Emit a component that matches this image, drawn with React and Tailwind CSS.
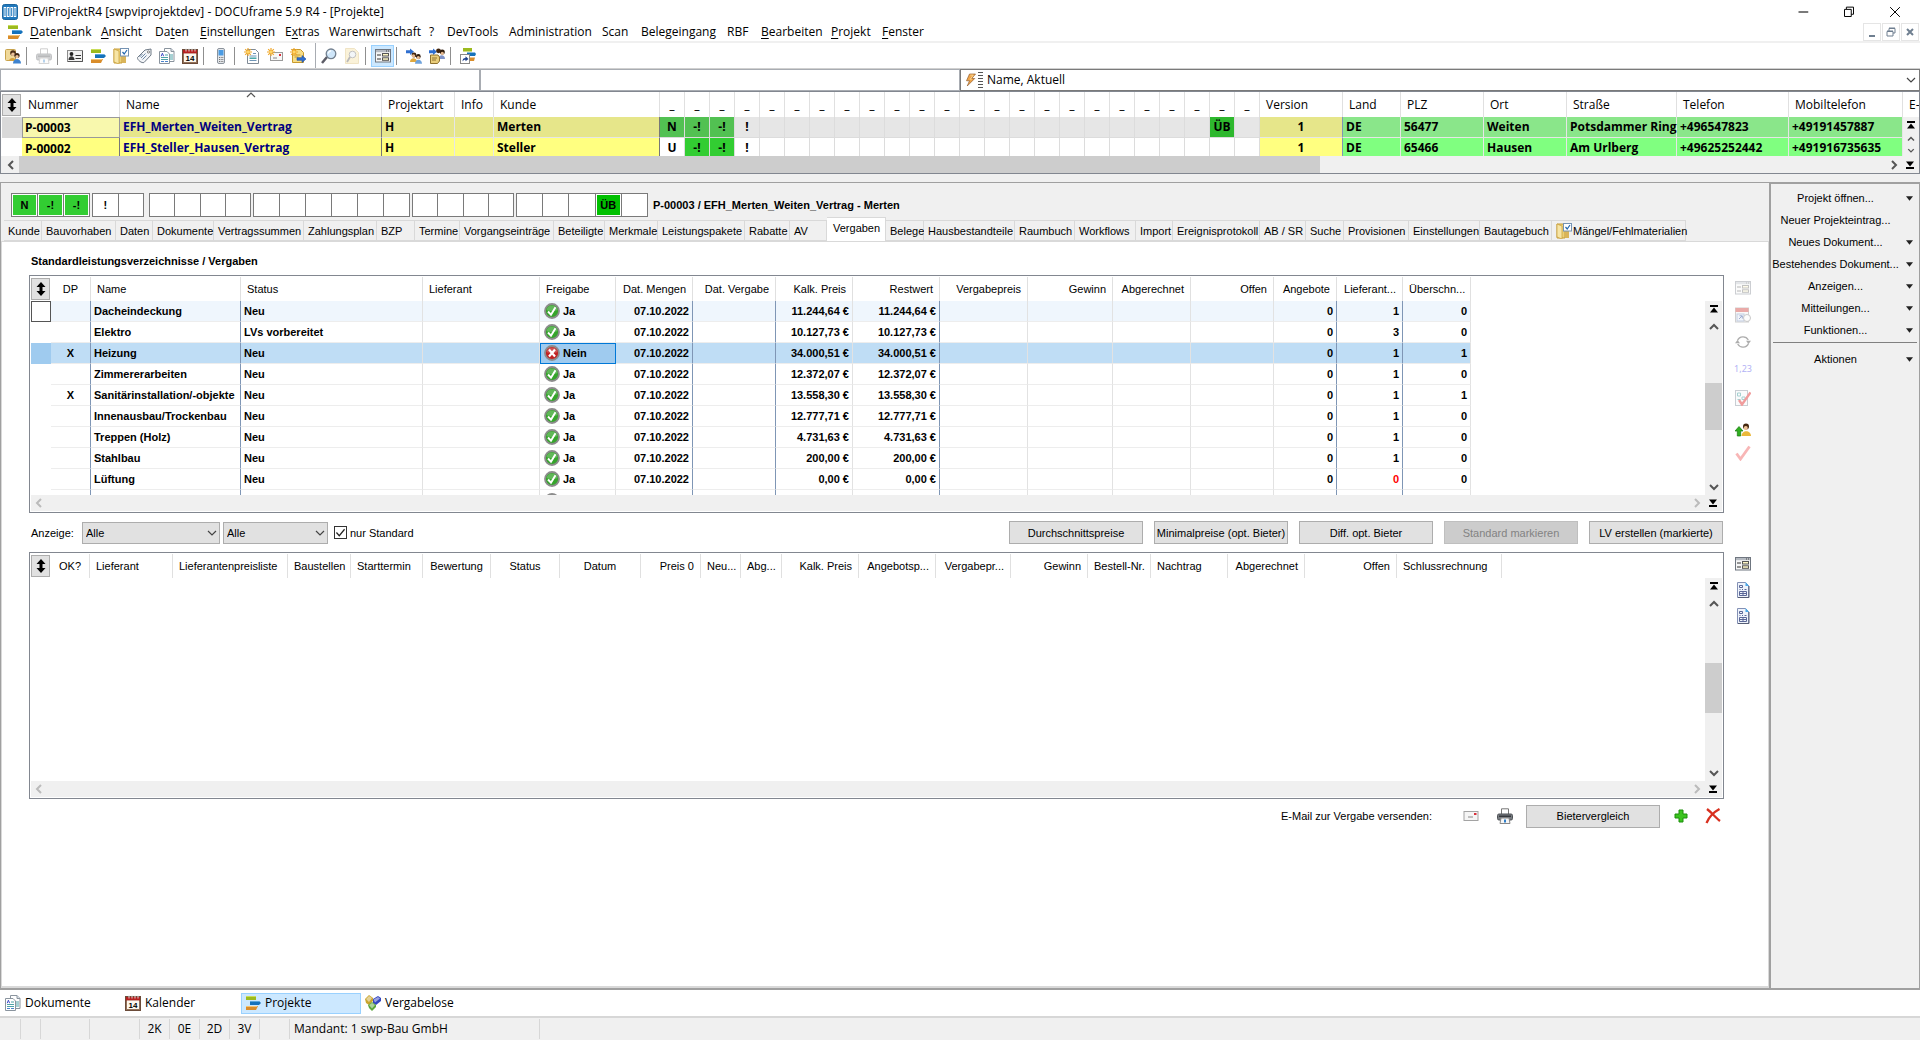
import { useState } from 'react';
import clsx from 'clsx';

/* ---------- Icons ---------- */

const Icon = ({ children, className = 'h-4 w-4' }) => (
  <svg viewBox="0 0 16 16" className={clsx('block shrink-0', className)} aria-hidden="true">
    {children}
  </svg>
);

const LogoIcon = () => (
  <Icon className="h-4 w-4">
    <rect x="0.5" y="0.5" width="15" height="15" rx="2" fill="#1f78bd" stroke="#1c669f" />
    <path d="M3 3v10M6.3 3v10M9.7 3v10M13 3v10" stroke="#fff" strokeWidth="2.6" />
    <path d="M3 4v8M6.300 4v8M9.700 4v8M13 4v8" stroke="#1f78bd" strokeWidth="1" />
  </Icon>
);

const BarsIcon = ({ className }) => (
  <Icon className={className}>
    <rect x="1" y="1" width="10" height="4" fill="#9cba1f" />
    <rect x="1" y="1" width="10" height="1" fill="#c9dd5a" />
    <path d="M5 6h9l2 2-2 2H5z" fill="#1672bb" />
    <rect x="5" y="6" width="9" height="1" fill="#5aa6de" />
    <path d="M1 11h12l-2 4H1z" fill="#d98d2b" />
    <rect x="1" y="11" width="11" height="1" fill="#f3c274" />
  </Icon>
);

const PersonCardIcon = () => (
  <Icon>
    <rect x="0.5" y="1.5" width="10" height="11" rx="1" fill="#f0d99a" stroke="#c8a34c" />
    <circle cx="8" cy="5" r="2.8" fill="#4a2c16" />
    <circle cx="8" cy="6.2" r="1.8" fill="#eac19a" />
    <path d="M4 13c0-4 7-4 7 0z" fill="#d3a13c" />
    <circle cx="12" cy="7.500" r="2.6" fill="#3c2414" />
    <circle cx="12" cy="8.8" r="1.7" fill="#eac19a" />
    <path d="M8 15.500c0-6 8-6 8 0z" fill="#3f83cf" />
  </Icon>
);

const PrinterIcon = ({ faded }) => (
  <Icon className={clsx('h-4 w-4', faded && 'opacity-35')}>
    <path d="M4.5 6V.8h7V6" fill="#fff" stroke="#777" />
    <rect x="0.5" y="6" width="15" height="6" rx="1.5" fill="#777b80" stroke="#4f5256" />
    <rect x="2" y="7.5" width="12" height="1.5" fill="#36393d" />
    <path d="M4 10h8l1 5.5H3z" fill="#f6f6f6" stroke="#888" />
    <rect x="7" y="11.5" width="2" height="3" fill="#2f7fca" />
  </Icon>
);

const IdCardIcon = () => (
  <Icon>
    <rect x="0.5" y="2.5" width="15" height="11" fill="#f1f1f1" stroke="#8c8c8c" />
    <path d="M15.5 3v10.5H1" fill="none" stroke="#555" />
    <circle cx="4.5" cy="6" r="1.9" fill="#222" />
    <path d="M1.500 12c0-5 6-5 6 0z" fill="#333" />
    <path d="M8.5 7.5H14M8.5 10.500H14" stroke="#333" />
  </Icon>
);

const CabinetIcon = () => (
  <Icon>
    <path d="M1 1h8v14H1z" fill="#eccf78" stroke="#c79d38" />
    <path d="M1 1l5 2v13l-5-2z" fill="#f7e5a6" stroke="#c79d38" strokeWidth=".7" />
    <path d="M9 8h4v7H9z" fill="#d9b45a" />
    <rect x="7.5" y="0.5" width="8" height="7.5" fill="#fff" stroke="#7593b3" />
    <path d="M9.5 4l1.700 2 2.800-4" fill="none" stroke="#2368b0" strokeWidth="1.2" />
  </Icon>
);

const TagIcon = () => (
  <Icon>
    <path d="M1.500 9.500L9 2l6-1v6l-7 7.500c-2 1-7-2.500-6.500-5z" fill="#f3f5f8" stroke="#6f7a86" />
    <path d="M5 10l4.5-4.5M6.5 11.5l4-4M3.500 9l3-3" stroke="#6f8aa6" />
    <circle cx="12.5" cy="4.000" r="1.1" fill="#fff" stroke="#666" strokeWidth=".8" />
  </Icon>
);

const DocsIcon = () => (
  <Icon>
    <path d="M5.5.5H12l3 3v10H5.5z" fill="#fff" stroke="#8a949e" />
    <path d="M12 .5v3h3" fill="#dde3ea" stroke="#8a949e" />
    <path d="M11 7h3M11 9h3M11 11h3" stroke="#4fa3a8" />
    <path d="M.5 3.500H8l2.500 2.500v9.500H.5z" fill="#fff" stroke="#8a949e" />
    <path d="M2.200 8.200l1.200-3 1.200 3" fill="none" stroke="#3d49c9" />
    <path d="M6 7h3M2 9.500h7M2 11.500h7" stroke="#4fa3a8" />
    <path d="M2 13.500h3M6 13.500h3" stroke="#4b83cc" />
  </Icon>
);

const CalendarIcon = () => (
  <Icon>
    <rect x="0.5" y="1.5" width="15" height="14" fill="#93725a" stroke="#6b4b39" />
    <rect x="1" y="2" width="14" height="3.5" fill="#b61f1f" />
    <path d="M4 .5v3M7 .5v3M10 .5v3M13 .5v3" stroke="#ddd" />
    <rect x="2" y="5.5" width="12" height="8.5" fill="#fdf7ee" />
    <text x="8" y="12.500" textAnchor="middle" fontSize="8" fontWeight="700" fontFamily="Liberation Sans, sans-serif">14</text>
  </Icon>
);

const PhoneIcon = () => (
  <Icon>
    <rect x="4.5" y="0.5" width="7" height="15" rx="1.5" fill="#e3e6ea" stroke="#8b939c" />
    <rect x="5.5" y="2" width="5" height="5.5" fill="#4b9be3" />
    <path d="M6 9.500h1M7.700 9.500h1M9.300 9.500h1M6 11.500h1M7.700 11.500h1M9.300 11.500h1M6 13.500h1M7.700 13.500h1M9.300 13.500h1" stroke="#777" />
  </Icon>
);

const Star = () => (
  <>
    <path d="M4 0v8M0 4h8M1.200 1.200l5.600 5.600M6.800 1.200L1.200 6.800" stroke="#f0a72a" strokeWidth="1.2" />
    <circle cx="4" cy="4" r="1.5" fill="#ffd76a" />
  </>
);

const NewDocIcon = () => (
  <Icon>
    <path d="M3.5 1.500h8l3 3v11h-11z" fill="#fff" stroke="#7f8a96" />
    <path d="M9 5.500h3M5.500 8h7M5.500 12.500h7" stroke="#6f95b7" />
    <path d="M5.500 10.200h7" stroke="#39a0a0" strokeWidth="1.4" />
    <Star />
  </Icon>
);

const NewMailIcon = () => (
  <Icon>
    <rect x="3.5" y="4.5" width="12" height="8" fill="#f7f7f7" stroke="#9b9b9b" />
    <rect x="12" y="6" width="2" height="2" fill="#d9303a" />
    <path d="M6 10h4" stroke="#888" />
    <Star />
  </Icon>
);

const NoteArrowIcon = () => (
  <Icon>
    <path d="M2.5 1.500h8l3 3v10h-11z" fill="#f7dd86" stroke="#c89a2d" />
    <path d="M4.500 7h6M4.500 9h4" stroke="#c89a2d" />
    <path d="M7 9.700h5V7.500l4 3.500-4 3.500v-2.200H7z" fill="#2f6fd0" stroke="#1c4b9c" strokeWidth=".6" />
    <Star />
  </Icon>
);

const SearchIcon = () => (
  <Icon>
    <path d="M1 15l5-6" stroke="#5c5c66" strokeWidth="2.5" />
    <circle cx="10" cy="5.800" r="4.8" fill="#cfe6f9" stroke="#73808f" strokeWidth="1.3" />
    <path d="M7.500 5.500a2.600 2.600 0 012.600-2.600" fill="none" stroke="#fff" strokeWidth="1.3" />
  </Icon>
);

const SearchNoteIcon = () => (
  <Icon className="h-4 w-4 opacity-50">
    <path d="M1.500.5h9l4 4v11h-13z" fill="#f7e6b5" stroke="#e3cb8c" />
    <circle cx="8.500" cy="6.500" r="3.3" fill="#e9eef3" stroke="#888" />
    <path d="M6 9l-3 5" stroke="#777" strokeWidth="1.8" />
  </Icon>
);

const FormIcon = ({ faded }) => (
  <Icon className={clsx('h-4 w-4', faded && 'opacity-35')}>
    <rect x="0.5" y="1.5" width="15" height="12.5" fill="#f6f6f6" stroke="#6f7680" />
    <rect x="1" y="2" width="14" height="2.2" fill="#b5bac1" />
    <path d="M11 3h1M13 3h1" stroke="#444" />
    <path d="M2 7h4M2 11h4" stroke="#333" />
    <rect x="7.5" y="5.5" width="6" height="2.5" fill="#fdf6c3" stroke="#555" />
    <rect x="7.5" y="9.8" width="6" height="2.5" fill="#fdf6c3" stroke="#555" />
  </Icon>
);

const PeopleArrowIcon = () => (
  <Icon>
    <path d="M0 2.300h4V.5l4 3.300-4 3.300V5.200H0z" fill="#2f6fd0" />
    <circle cx="8" cy="7" r="2.4" fill="#42260f" />
    <circle cx="7.500" cy="8" r="1.7" fill="#e5b88e" />
    <path d="M4 14c0-5 7-5 7 0z" fill="#e0a93d" />
    <circle cx="12.300" cy="8.500" r="2.4" fill="#2f1b0c" />
    <circle cx="12.300" cy="9.600" r="1.6" fill="#e5b88e" />
    <path d="M9 15.800c0-5.500 7-5.500 7 0z" fill="#6fa3dc" />
  </Icon>
);

const PeopleNoteIcon = () => (
  <Icon>
    <path d="M0 2.300h4V.5l4 3.300-4 3.300V5.200H0z" fill="#2f6fd0" />
    <circle cx="9.500" cy="2.800" r="2.4" fill="#42260f" />
    <circle cx="13.300" cy="4" r="2.5" fill="#2f1b0c" />
    <circle cx="13.300" cy="5.300" r="1.6" fill="#e5b88e" />
    <path d="M9.500 11c0-5 6.500-5 6.500 0z" fill="#7e93c9" />
    <path d="M1.500 7h7.500l1.500 2v4l-2 2.500h-7z" fill="#e9cd7a" stroke="#8f7230" />
    <path d="M3 10h5M3 12h4" stroke="#8f7230" />
  </Icon>
);

const BarsShortcutIcon = () => (
  <Icon>
    <rect x="3" y="0" width="9" height="3.5" fill="#9cba1f" />
    <path d="M7 4.500h8l1 1.500-1 2H7z" fill="#1672bb" />
    <path d="M9 9.500h6l-1 3.500H9z" fill="#d98d2b" />
    <rect x="0.5" y="6.5" width="9" height="9" fill="#fff" stroke="#888" />
    <path d="M2.500 13.500c0-2.500 1-3.500 3-3.500V8.300L8.500 11 5.500 13.300v-1.600c-1.500 0-2.300.6-3 1.800z" fill="#1c3f8a" />
  </Icon>
);

const BoltIcon = () => (
  <Icon className="h-4 w-3">
    <path d="M6 0h8L9 6h4L3 16l3-7H2z" fill="#f0a54a" stroke="#8d5a2a" strokeWidth=".9" />
    <path d="M7 1.500h4L7 7h2" fill="none" stroke="#fde3a4" />
  </Icon>
);

const StatusIcon = ({ ok }) => (
  <Icon>
    <circle cx="8" cy="8" r="7" fill={ok ? '#35a52b' : '#c22222'} stroke="#8c8c8c" strokeWidth="1.8" />
    <path d="M2.500 7a5.600 5.600 0 0111 0c-3 1.500-8 1.500-11 0z" fill="#fff" opacity=".22" />
    {ok ? (
      <path d="M4 8.500l3 3.200 4.500-7.500" fill="none" stroke="#fff" strokeWidth="2" />
    ) : (
      <path d="M5 4.500l6 7M11 4.500l-6 7" stroke="#fff" strokeWidth="2.2" />
    )}
  </Icon>
);

const CalendarLinkIcon = () => (
  <Icon className="h-4 w-4 opacity-45">
    <rect x="0.5" y="1" width="13" height="14" fill="#f3f3f3" stroke="#999" />
    <rect x="0.5" y="1" width="13" height="4" fill="#d2453f" />
    <rect x="2" y="7" width="7" height="7" fill="#e4ebf7" stroke="#7e94bd" />
    <path d="M4 12l3-3M4.500 8.800h2.800v2.800" fill="none" stroke="#2a4c9b" />
    <circle cx="12" cy="11" r="3.5" fill="#fafafa" stroke="#888" />
  </Icon>
);

const RefreshIcon = () => (
  <Icon className="h-4 w-4 opacity-60">
    <path d="M2.500 6.500A6 6 0 0113.300 6M13.500 9.500A6 6 0 012.700 10" fill="none" stroke="#777" strokeWidth="1.3" />
    <path d="M0 9.300L2.500 6 5 9.300zM11 6.700h5L13.500 10z" fill="#777" />
  </Icon>
);

const CheckListIcon = () => (
  <Icon className="h-4 w-4 opacity-45">
    <rect x="0.5" y="0.5" width="12" height="15" fill="#f5f8fa" stroke="#8a949e" />
    <path d="M2.500 3h3v3h-3zM7 7h3v2.500H7zM2.500 9.500h3" fill="none" stroke="#3a9a9a" />
    <path d="M4 10l3 4.500L15.500 2.500" fill="none" stroke="#e02525" strokeWidth="2.4" />
  </Icon>
);

const PersonUpIcon = () => (
  <Icon>
    <path d="M4 4.500l4 4.500H5.700v5H2.300V9H0z" fill="#2fae1f" stroke="#187a10" strokeWidth=".7" />
    <circle cx="11" cy="4.500" r="3" fill="#45270f" />
    <circle cx="10.800" cy="6" r="2" fill="#efc397" />
    <path d="M6.500 14c0-6.500 9.500-6.500 9.500 0z" fill="#eab83b" />
  </Icon>
);

const RedCheckIcon = () => (
  <Icon className="h-4 w-4 opacity-40">
    <path d="M1.500 8.500l4 5.500L14.500 1.500" fill="none" stroke="#f04a4a" strokeWidth="2.8" />
  </Icon>
);

const ReportIcon = () => (
  <Icon>
    <path d="M2.500.5h8l3 3v12h-11z" fill="#eef3fb" stroke="#8390b5" />
    <path d="M14 4v11.500H3" fill="none" stroke="#555d75" />
    <path d="M10.500 0v4H14z" fill="#4ba8e8" />
    <path d="M4.500 3.500h3v2h-3zM4.500 7.500h1M7 7.500h1M9.500 7.500h2M4.500 9.500h7v4h-7zM4.500 11.500h7M8 9.500v4" fill="none" stroke="#5b6797" />
  </Icon>
);

const MailIcon = () => (
  <Icon>
    <rect x="1" y="3.5" width="14" height="9" fill="#f5f5f5" stroke="#a3a3a3" />
    <rect x="11" y="5" width="2.5" height="2" fill="#d9303a" />
    <path d="M5 9h5" stroke="#888" />
  </Icon>
);

const PlusIcon = () => (
  <Icon>
    <path d="M6 2h4v4h4v4h-4v4H6v-4H2V6h4z" fill="#3bc41f" stroke="#1d8f0c" />
  </Icon>
);

const DeleteIcon = () => (
  <Icon>
    <path d="M2 1c4 3 9 9 13 12M14.500 1C9 4 4 9 1.500 15" fill="none" stroke="#d8301f" strokeWidth="2.3" />
  </Icon>
);

const BlocksIcon = () => (
  <Icon>
    <path d="M0 4l4-4 4 3v3l-4 4-3-2z" fill="#c9a52e" />
    <path d="M8 4l5-3 3 2v3l-5 4-3-2z" fill="#3346c0" />
    <path d="M3 10l4-3 4 3v2l-4 4-3-3z" fill="#5ba53a" />
    <path d="M1 4l3-3 3 2-3 4zM8.500 4.500L13 2l2 1.500-5 4zM4 10l3-2 3 2-3 3.500z" fill="#fff" opacity=".5" />
  </Icon>
);

const UpDownIcon = () => (
  <Icon className="h-4 w-4">
    <path d="M8 1l4.500 5H9.500v4h3L8 15l-4.500-5h3V6h-3z" fill="#000" />
  </Icon>
);

const chevrons = {
  up: 'M4 10l4-4 4 4',
  down: 'M4 6l4 4 4-4',
  left: 'M10 4L6 8l4 4',
  right: 'M6 4l4 4-4 4',
};

const Chevron = ({ dir, className = 'h-4 w-4 text-[#555]', width = 2 }) => (
  <Icon className={className}>
    <path d={chevrons[dir]} fill="none" stroke="currentColor" strokeWidth={width} />
  </Icon>
);

const EdgeIcon = ({ end }) => (
  <Icon className={clsx('h-4 w-4', end && 'rotate-180')}>
    <path d="M4 4h8v2H4zM8 6.500l4 5H4z" fill="#000" />
  </Icon>
);

/* ---------- Data ---------- */

// access key, text after it, text before it, width
const menu = [
  ['D', 'atenbank', '', 'w-[71px]'],
  ['A', 'nsicht', '', 'w-[54px]'],
  ['t', 'en', 'Da', 'w-[45px]'],
  ['E', 'instellungen', '', 'w-[85px]'],
  ['x', 'tras', 'E', 'w-[44px]'],
  ['', 'Warenwirtschaft', '', 'w-[100px]'],
  ['', '?', '', 'w-[18px]'],
  ['', 'DevTools', '', 'w-[62px]'],
  ['', 'Administration', '', 'w-[93px]'],
  ['', 'Scan', '', 'w-[39px]'],
  ['', 'Belegeingang', '', 'w-[86px]'],
  ['', 'RBF', '', 'w-[34px]'],
  ['B', 'earbeiten', '', 'w-[70px]'],
  ['P', 'rojekt', '', 'w-[51px]'],
  ['F', 'enster', '', 'w-[60px]'],
];

const toolbar = [
  { label: 'Adressen', icon: PersonCardIcon },
  null,
  { label: 'Drucken', icon: PrinterIcon, faded: true },
  null,
  { label: 'Kontakte', icon: IdCardIcon },
  { label: 'Projekte', icon: BarsIcon },
  { label: 'Mängel', icon: CabinetIcon },
  { label: 'Artikel', icon: TagIcon },
  { label: 'Dokumente', icon: DocsIcon },
  { label: 'Kalender', icon: CalendarIcon },
  null,
  { label: 'Telefon', icon: PhoneIcon },
  null,
  { label: 'Neues Dokument', icon: NewDocIcon },
  { label: 'Neue E-Mail', icon: NewMailIcon },
  { label: 'Neue Notiz', icon: NoteArrowIcon },
  'full',
  { label: 'Suchen', icon: SearchIcon },
  { label: 'In Notizen suchen', icon: SearchNoteIcon },
  null,
  { label: 'Formular', icon: FormIcon, active: true },
  null,
  { label: 'Beteiligte', icon: PeopleArrowIcon },
  { label: 'Beteiligte Notiz', icon: PeopleNoteIcon },
  null,
  { label: 'Projekt verknüpfen', icon: BarsShortcutIcon },
];

const flagColumns = Array.from({ length: 24 }, (_, i) => i);

const projectColumns = [20, 98, 262, 73, 39, 166, ...flagColumns.map(() => 25), 83, 58, 83, 83, 110, 112, 114];

const projects = [
  {
    number: 'P-00003',
    name: 'EFH_Merten_Weiten_Vertrag',
    type: 'H',
    customer: 'Merten',
    flags: { 0: 'N', 1: '-!', 2: '-!', 3: '!', 22: 'ÜB' },
    version: '1',
    address: ['DE', '56477', 'Weiten', 'Potsdammer Ring', '+496547823', '+49191457887'],
    current: true,
  },
  {
    number: 'P-00002',
    name: 'EFH_Steller_Hausen_Vertrag',
    type: 'H',
    customer: 'Steller',
    flags: { 0: 'U', 1: '-!', 2: '-!', 3: '!' },
    version: '1',
    address: ['DE', '65466', 'Hausen', 'Am Urlberg', '+49625252442', '+491916735635'],
    current: false,
  },
];

const flagGroups = [
  { width: 'w-[79px]', gap: '', cells: ['N', '-!', '-!'] },
  { width: 'w-[52px]', gap: 'ml-[2px]', cells: ['!', ''] },
  { width: 'w-[102px]', gap: 'ml-[5px]', cells: ['', '', '', ''] },
  { width: 'w-[157px]', gap: 'ml-[2px]', cells: ['', '', '', '', '', ''] },
  { width: 'w-[102px]', gap: 'ml-[2px]', cells: ['', '', '', ''] },
  { width: 'w-[132px]', gap: 'ml-[2px]', cells: ['', '', '', 'ÜB', ''] },
];

const tabs = [
  ['Kunde', 'w-[38px]'],
  ['Bauvorhaben', 'w-[74px]'],
  ['Daten', 'w-[37px]'],
  ['Dokumente', 'w-[61px]'],
  ['Vertragssummen', 'w-[90px]'],
  ['Zahlungsplan', 'w-[73px]'],
  ['BZP', 'w-[38px]'],
  ['Termine', 'w-[45px]'],
  ['Vorgangseinträge', 'w-[94px]'],
  ['Beteiligte', 'w-[51px]'],
  ['Merkmale', 'w-[53px]'],
  ['Leistungspakete', 'w-[87px]'],
  ['Rabatte', 'w-[45px]'],
  ['AV', 'w-[37px]'],
  ['Vergaben', 'w-[59px]'],
  ['Belege', 'w-[38px]'],
  ['Hausbestandteile', 'w-[91px]'],
  ['Raumbuch', 'w-[60px]'],
  ['Workflows', 'w-[61px]'],
  ['Import', 'w-[37px]'],
  ['Ereignisprotokoll', 'w-[87px]'],
  ['AB / SR', 'w-[46px]'],
  ['Suche', 'w-[38px]'],
  ['Provisionen', 'w-[65px]'],
  ['Einstellungen', 'w-[71px]'],
  ['Bautagebuch', 'w-[72px]'],
  ['Mängel/Fehlmaterialien', 'w-[134px]'],
];

// dark = a dark rule on the right edge of the column
const tradeColumns = [
  { title: 'DP', width: 40, align: 'center', dark: true },
  { title: 'Name', width: 150, dark: true },
  { title: 'Status', width: 182 },
  { title: 'Lieferant', width: 117 },
  { title: 'Freigabe', width: 76 },
  { title: 'Dat. Mengen', width: 77, align: 'right', dark: true },
  { title: 'Dat. Vergabe', width: 83, align: 'right', dark: true },
  { title: 'Kalk. Preis', width: 77, align: 'right' },
  { title: 'Restwert', width: 87, align: 'right', dark: true },
  { title: 'Vergabepreis', width: 88, align: 'right' },
  { title: 'Gewinn', width: 85, align: 'right' },
  { title: 'Abgerechnet', width: 78, align: 'right' },
  { title: 'Offen', width: 83, align: 'right' },
  { title: 'Angebote', width: 63, align: 'right', dark: true },
  { title: 'Lieferant...', width: 66, align: 'right', dark: true },
  { title: 'Überschn...', width: 68, align: 'right' },
];

const trades = [
  { name: 'Dacheindeckung', status: 'Neu', price: '11.244,64 €', suppliers: 1, overlaps: 0 },
  { name: 'Elektro', status: 'LVs vorbereitet', price: '10.127,73 €', suppliers: 3, overlaps: 0 },
  { name: 'Heizung', status: 'Neu', price: '34.000,51 €', suppliers: 1, overlaps: 1, dp: true, blocked: true },
  { name: 'Zimmererarbeiten', status: 'Neu', price: '12.372,07 €', suppliers: 1, overlaps: 0 },
  { name: 'Sanitärinstallation/-objekte', status: 'Neu', price: '13.558,30 €', suppliers: 1, overlaps: 1, dp: true },
  { name: 'Innenausbau/Trockenbau', status: 'Neu', price: '12.777,71 €', suppliers: 1, overlaps: 0 },
  { name: 'Treppen (Holz)', status: 'Neu', price: '4.731,63 €', suppliers: 1, overlaps: 0 },
  { name: 'Stahlbau', status: 'Neu', price: '200,00 €', suppliers: 1, overlaps: 0 },
  { name: 'Lüftung', status: 'Neu', price: '0,00 €', suppliers: 0, overlaps: 0 },
];

const bidderColumns = [
  { title: 'OK?', width: 39, align: 'center' },
  { title: 'Lieferant', width: 83 },
  { title: 'Lieferantenpreisliste', width: 115 },
  { title: 'Baustellen', width: 63 },
  { title: 'Starttermin', width: 72 },
  { title: 'Bewertung', width: 68, align: 'center' },
  { title: 'Status', width: 69, align: 'center' },
  { title: 'Datum', width: 81, align: 'center' },
  { title: 'Preis 0', width: 60, align: 'right' },
  { title: 'Neu...', width: 40 },
  { title: 'Abg...', width: 41 },
  { title: 'Kalk. Preis', width: 77, align: 'right' },
  { title: 'Angebotsp...', width: 77, align: 'right' },
  { title: 'Vergabepr...', width: 75, align: 'right' },
  { title: 'Gewinn', width: 77, align: 'right' },
  { title: 'Bestell-Nr.', width: 63 },
  { title: 'Nachtrag', width: 77 },
  { title: 'Abgerechnet', width: 77, align: 'right' },
  { title: 'Offen', width: 92, align: 'right' },
  { title: 'Schlussrechnung', width: 105 },
];

const sideActions = [
  ['Projekt öffnen...', true],
  ['Neuer Projekteintrag...', false],
  ['Neues Dokument...', true],
  ['Bestehendes Dokument...', true],
  ['Anzeigen...', true],
  ['Mitteilungen...', true],
  ['Funktionen...', true],
];

const workspaces = [
  ['Dokumente', DocsIcon],
  ['Kalender', CalendarIcon],
  ['Projekte', BarsIcon],
  ['Vergabelose', BlocksIcon],
];

const statusCells = [
  ['', 'w-[21px]'],
  ['', 'w-[20px]'],
  ['', 'w-[49px]'],
  ['', 'w-[50px]'],
  ['2K', 'w-[30px]'],
  ['0E', 'w-[30px]'],
  ['2D', 'w-[30px]'],
  ['3V', 'w-[30px]'],
  ['', 'w-[30px]'],
];

const alignClass = { center: 'text-center', right: 'text-right', left: 'text-left' };

const segoe = "font-['Open_Sans','Noto_Sans',sans-serif] text-[12px]";

/* ---------- Shared pieces ---------- */

const SortHandle = ({ label }) => (
  <button aria-label={label} className="flex h-[22px] w-[19px] items-center justify-center border border-[#adadad] bg-[#e1e1e1]">
    <UpDownIcon />
  </button>
);

const VerticalScroll = ({ children }) => (
  <div className="flex w-[17px] shrink-0 flex-col items-center bg-[#f0f0f0]">
    <EdgeIcon />
    <Chevron dir="up" className="mt-[2px] h-4 w-4 text-[#555]" />
    <div className="w-full flex-1">{children}</div>
    <Chevron dir="down" />
  </div>
);

const HorizontalScroll = () => (
  <div className="flex h-4 items-center bg-[#f0f0f0]">
    <Chevron dir="left" className="h-4 w-4 text-[#bbb]" />
    <div className="flex-1" />
    <Chevron dir="right" className="h-4 w-4 text-[#bbb]" />
    <div className="w-[17px]">
      <EdgeIcon end />
    </div>
  </div>
);

const GridHead = ({ columns, label }) => (
  <>
    <colgroup>
      <col style={{ width: 20 }} />
      {columns.map((col) => (
        <col key={col.title} style={{ width: col.width }} />
      ))}
    </colgroup>
    <thead>
      <tr className="h-6">
        <th className="p-0">
          <SortHandle label={label} />
        </th>
        {columns.map((col) => (
          <th
            key={col.title}
            className={clsx(
              'border-r border-[#e0e0e0] px-[6px] font-normal whitespace-nowrap',
              alignClass[col.align || 'left'],
            )}
          >
            {col.title}
          </th>
        ))}
      </tr>
    </thead>
  </>
);

const PushButton = ({ children, disabled }) => (
  <button
    disabled={disabled}
    className={clsx(
      'h-[23px] w-[134px] border text-center whitespace-nowrap',
      disabled ? 'border-[#bfbfbf] bg-[#cccccc] text-[#838383]' : 'border-[#adadad] bg-[#e1e1e1]',
    )}
  >
    {children}
  </button>
);

const DropDown = ({ label, id, className }) => (
  <div className={clsx('relative h-[22px]', className)}>
    <select
      id={id}
      aria-label={label}
      className="h-full w-full appearance-none border border-[#adadad] bg-[#e1e1e1] pl-[3px]"
    >
      <option>Alle</option>
    </select>
    <Chevron dir="down" width={1.2} className="pointer-events-none absolute top-[3px] right-0 h-4 w-4 text-[#444]" />
  </div>
);

/* ---------- Sections ---------- */

const TitleBar = () => (
  <header className={clsx('bg-white', segoe)}>
    <div className="flex h-[23px] items-center pr-[2px] pl-[2px]">
      <LogoIcon />
      <h1 className="ml-[5px] flex-1 whitespace-nowrap">DFViProjektR4 [swpviprojektdev] - DOCUframe 5.9 R4 - [Projekte]</h1>
      <button aria-label="Minimieren" className="flex w-[46px] justify-center">
        <Icon className="h-3 w-3">
          <path d="M2 8h13" stroke="#000" strokeWidth="1.4" />
        </Icon>
      </button>
      <button aria-label="Wiederherstellen" className="flex w-[46px] justify-center">
        <Icon className="h-3 w-3">
          <path d="M2 4.500h9V14H2zM4.500 4V1.500H14V11h-3" fill="none" stroke="#000" strokeWidth="1.3" />
        </Icon>
      </button>
      <button aria-label="Schließen" className="flex w-[46px] justify-center">
        <Icon className="h-3 w-3">
          <path d="M1.500 1.500l13 13M14.500 1.500l-13 13" stroke="#000" strokeWidth="1.3" />
        </Icon>
      </button>
    </div>
    <nav className="flex h-5 items-center border-b-2 border-[#f0f0f0] pl-[7px]">
      <BarsIcon className="h-4 w-4" />
      <div className="ml-[7px] flex flex-1">
        {menu.map(([key, rest, before, width]) => (
          <button key={rest} className={clsx('text-left whitespace-nowrap', width)}>
            {before}
            <span className="underline underline-offset-2">{key}</span>
            {rest}
          </button>
        ))}
      </div>
      <div className="flex gap-px pr-px text-[#6f7f90]">
        <button aria-label="Fenster minimieren" className="h-[18px] w-[18px] border border-[#e5e5e5]">
          <Icon className="h-4 w-4">
            <path d="M5 12h6" stroke="currentColor" strokeWidth="2" />
          </Icon>
        </button>
        <button aria-label="Fenster wiederherstellen" className="h-[18px] w-[18px] border border-[#e5e5e5]">
          <Icon className="h-4 w-4">
            <path d="M4 7.500h6V12H4zM6 7V4.500h6V9h-2M4 7h6M6 4h6" fill="none" stroke="currentColor" />
          </Icon>
        </button>
        <button aria-label="Fenster schließen" className="h-[18px] w-[18px] border border-[#e5e5e5]">
          <Icon className="h-4 w-4">
            <path d="M5 5l6 6M11 5l-6 6" stroke="currentColor" strokeWidth="2" />
          </Icon>
        </button>
      </div>
    </nav>
    <div className="flex h-[26px] items-center border-b border-[#d0d0d0] pl-px">
      {toolbar.map((item, i) => {
        if (item === 'full') return <span key={i} className="mr-px ml-[6px] h-full w-px bg-[#a8acb2]" />;
        if (!item) return <span key={i} className="mr-[5px] ml-[2px] h-[18px] w-px bg-[#8f8f8f]" />;
        return (
          <button
            key={item.label}
            aria-label={item.label}
            className={clsx(
              'flex h-[22px] w-[23px] items-center justify-center border',
              item.active ? 'border-[#99d1ff] bg-[#cce8ff]' : 'border-transparent',
            )}
          >
            <item.icon faded={item.faded} />
          </button>
        );
      })}
    </div>
  </header>
);

const SearchRow = () => (
  <div className={clsx('grid h-[22px] grid-cols-4 bg-white', segoe)}>
    <input aria-label="Suche Nummer" className="border border-[#a8acb2] px-1 outline-none" />
    <input aria-label="Suche Name" className="border border-[#a8acb2] px-1 outline-none" />
    <div className="relative col-span-2 flex items-center border border-[#7a7a7a] pl-[4px]">
      <BoltIcon />
      <span className="ml-px h-4 w-[5px] bg-[repeating-linear-gradient(#555_0_1px,#fff_1px_3px)]" />
      <select aria-label="Sortierung" className="h-full flex-1 appearance-none pl-[4px]">
        <option>Name, Aktuell</option>
      </select>
      <Chevron dir="down" width={1.2} className="pointer-events-none absolute right-0 h-4 w-4 text-[#444]" />
    </div>
  </div>
);

const flagColor = (flag, current) => {
  if (flag === 'ÜB') return 'bg-[#2eb82e]';
  if (flag === 'N' || flag === '-!') return current ? 'bg-[#52c152]' : 'bg-[#32cd32]';
  return current ? 'bg-[#e6e6e6]' : 'bg-white';
};

const ProjectList = () => {
  const head = 'border-r border-[#e0e0e0] px-[6px] text-left font-normal';
  const cell = 'border-b border-r border-[#e6e6e6] px-[3px]';

  return (
    <section className={clsx('border border-[#828790] bg-white', segoe)}>
      <div className="flex h-16">
        <div className="flex-1 overflow-hidden pl-px">
          <table className="w-[1901px] table-fixed border-separate border-spacing-0 whitespace-nowrap">
            <colgroup>
              {projectColumns.map((width, i) => (
                <col key={i} style={{ width }} />
              ))}
            </colgroup>
            <thead>
              <tr className="h-[25px]">
                <th className="p-0">
                  <SortHandle label="Projekte sortieren" />
                </th>
                <th className={head}>Nummer</th>
                <th className={clsx(head, 'relative')}>
                  Name
                  <Chevron dir="up" width={1.2} className="absolute -top-[5px] left-[123px] h-4 w-4 text-[#555]" />
                </th>
                <th className={head}>Projektart</th>
                <th className={clsx(head, 'text-center')}>Info</th>
                <th className={head}>Kunde</th>
                {flagColumns.map((i) => (
                  <th key={i} className="border-r border-[#e0e0e0] p-0 text-center font-bold">_</th>
                ))}
                <th className={clsx(head, 'text-center')}>Version</th>
                <th className={head}>Land</th>
                <th className={head}>PLZ</th>
                <th className={head}>Ort</th>
                <th className={head}>Straße</th>
                <th className={head}>Telefon</th>
                <th className={head}>Mobiltelefon</th>
              </tr>
            </thead>
            <tbody className="font-bold">
              {projects.map((p) => {
                const yellow = p.current ? 'bg-[#e6e68a]' : 'bg-[#ffff80]';
                const green = p.current ? 'bg-[#8ae68a]' : 'bg-[#80ff80]';
                return (
                  <tr key={p.number} className="h-[21px]">
                    <td className={p.current ? 'bg-[#d9d9d9]' : 'bg-white'} />
                    <td
                      className={clsx(
                        'px-[3px]',
                        p.current ? 'border border-[#999] bg-[#f8f8ad] pl-[2px]' : 'border-r border-r-[#777] bg-[#ffff80]',
                      )}
                    >
                      {p.number}
                    </td>
                    <td className={clsx(cell, yellow, 'border-r-[#777] text-[#000080]')}>{p.name}</td>
                    <td className={clsx(cell, yellow)}>{p.type}</td>
                    <td className={clsx(cell, yellow)} />
                    <td className={clsx(cell, yellow, 'border-r-[#777]')}>{p.customer}</td>
                    {flagColumns.map((i) => (
                      <td
                        key={i}
                        className={clsx('border-r border-b border-[#dcdcdc] p-0 text-center', flagColor(p.flags[i], p.current))}
                      >
                        {p.flags[i]}
                      </td>
                    ))}
                    <td className={clsx(cell, yellow, 'border-r-[#7f96b5] text-center')}>{p.version}</td>
                    {p.address.map((value) => (
                      <td key={value} className={clsx(cell, green)}>{value}</td>
                    ))}
                  </tr>
                );
              })}
            </tbody>
          </table>
        </div>
        <div className="flex w-4 shrink-0 flex-col bg-[#f0f0f0]">
          <div className="flex h-[25px] items-center overflow-hidden bg-white pl-[6px] whitespace-nowrap">E-</div>
          <EdgeIcon />
          <Chevron dir="up" className="h-3 w-4 text-[#555]" />
          <Chevron dir="down" className="h-[11px] w-4 text-[#555]" />
        </div>
      </div>
      <div className="flex h-[17px] items-center bg-[#f0f0f0] pr-px pl-[2px]">
        <Chevron dir="left" />
        <div className="h-full flex-1">
          <div className="h-full w-[69.7%] bg-[#cdcdcd]" />
        </div>
        <Chevron dir="right" />
        <EdgeIcon end />
      </div>
    </section>
  );
};

const StatusStrip = () => (
  <div className="flex h-[34px] items-center pt-[10px] pl-[10px] font-bold">
    {flagGroups.map((group, i) => (
      <div key={i} className={clsx('flex h-6 divide-x divide-[#7a7a7a] border border-[#7a7a7a] bg-white', group.width, group.gap)}>
        {group.cells.map((flag, j) => (
          <div key={j} className="flex-1 p-px">
            <div
              className={clsx(
                'flex h-full items-center justify-center',
                flag === 'ÜB' && 'bg-[#00c000]',
                (flag === 'N' || flag === '-!') && 'bg-[#32cd32]',
              )}
            >
              {flag}
            </div>
          </div>
        ))}
      </div>
    ))}
    <p className="ml-[5px] whitespace-nowrap">P-00003 / EFH_Merten_Weiten_Vertrag - Merten</p>
  </div>
);

const TabStrip = ({ active, onSelect }) => (
  <div role="tablist" className="flex h-6 items-end pl-[3px]">
    {tabs.map(([name, width]) => {
      const isActive = name === active;
      return (
        <button
          key={name}
          role="tab"
          aria-selected={isActive}
          onClick={() => onSelect(name)}
          className={clsx(
            'flex shrink-0 items-center border-t border-r border-[#d9d9d9] whitespace-nowrap',
            width,
            isActive ? 'h-6 bg-white pb-[3px] pl-[6px]' : 'h-[21px] border-b bg-[#f0f0f0] pl-[4px]',
          )}
        >
          {name.startsWith('Mängel') && (
            <span className="mr-px">
              <CabinetIcon />
            </span>
          )}
          {name}
        </button>
      );
    })}
  </div>
);

const TradeGrid = () => (
  <div className="flex-1 border border-[#828790] bg-white p-px">
    <div className="flex h-[218px]">
      <div className="flex-1 overflow-hidden">
        <table className="w-[1440px] table-fixed border-separate border-spacing-0 whitespace-nowrap">
          <GridHead columns={tradeColumns} label="Vergaben sortieren" />
          <tbody className="font-bold">
            {trades.map((t, row) => {
              const values = [
                t.dp ? 'X' : '',
                t.name,
                t.status,
                '',
                t.blocked ? 'Nein' : 'Ja',
                '07.10.2022',
                '',
                t.price,
                t.price,
                '',
                '',
                '',
                '',
                0,
                t.suppliers,
                t.overlaps,
              ];
              const tint = t.blocked ? 'bg-[#bfddf5]' : row === 0 ? 'bg-[#eff6fd]' : 'bg-white';
              return (
                <tr key={t.name} className="h-[21px]">
                  <td
                    className={clsx(
                      'p-0',
                      row === 0 && 'border border-[#555] bg-white',
                      t.blocked && 'bg-[#9fcbef]',
                    )}
                  />
                  {values.map((value, i) => {
                    const col = tradeColumns[i];
                    const release = col.title === 'Freigabe';
                    return (
                      <td
                        key={col.title}
                        className={clsx(
                          'overflow-hidden border-r border-b border-b-[#ededed] py-0',
                          release ? 'pr-0 pl-[4px]' : 'px-[3px]',
                          alignClass[col.align || 'left'],
                          col.dark ? 'border-r-[#7f96b5]' : 'border-r-[#e2e2e2]',
                          release && t.blocked ? 'bg-[#9fcbef] outline -outline-offset-1 outline-[#0078d7]' : tint,
                          col.title === 'Lieferant...' && t.suppliers === 0 && 'text-[#ff0000]',
                        )}
                      >
                        {release ? (
                          <span className="flex items-center gap-[3px]">
                            <StatusIcon ok={!t.blocked} />
                            {value}
                          </span>
                        ) : (
                          value
                        )}
                      </td>
                    );
                  })}
                </tr>
              );
            })}
            {/* next row, cut off by the viewport */}
            <tr className="h-[21px]">
              <td />
              {tradeColumns.map((col) => (
                <td
                  key={col.title}
                  className={clsx('border-r py-0 pl-[4px]', col.dark ? 'border-r-[#7f96b5]' : 'border-r-[#e2e2e2]')}
                >
                  {col.title === 'Freigabe' && <StatusIcon ok />}
                </td>
              ))}
            </tr>
          </tbody>
        </table>
      </div>
      <div className="flex pt-6">
        <VerticalScroll>
          <div className="mt-[48px] h-[47px] bg-[#cdcdcd]" />
        </VerticalScroll>
      </div>
    </div>
    <HorizontalScroll />
  </div>
);

const BidderGrid = () => (
  <div className="flex-1 border border-[#828790] bg-white p-px">
    <div className="flex h-[227px]">
      <div className="flex-1 overflow-hidden">
        <table className="w-[1471px] table-fixed border-separate border-spacing-0 whitespace-nowrap">
          <GridHead columns={bidderColumns} label="Bieter sortieren" />
          <tbody />
        </table>
      </div>
      <div className="flex pt-6">
        <VerticalScroll>
          <div className="mt-[51px] h-[50px] bg-[#cdcdcd]" />
        </VerticalScroll>
      </div>
    </div>
    <HorizontalScroll />
  </div>
);

const IconButton = ({ label, children }) => (
  <button aria-label={label} className="flex h-4 w-4 items-center justify-center">
    {children}
  </button>
);

const AwardPage = () => {
  const [standardOnly, setStandardOnly] = useState(true);

  return (
    <main className="flex-1 border-x border-t border-b-2 border-[#d9d9d9] bg-white pl-[27px]">
      <h2 className="pt-[11px] pb-[6px] pl-[2px] leading-4 font-bold">Standardleistungsverzeichnisse / Vergaben</h2>

      <div className="flex">
        <TradeGrid />
        <div className="flex w-[44px] flex-col items-start gap-[11px] pt-[5px] pl-[11px]">
          <IconButton label="Formular"><FormIcon faded /></IconButton>
          <IconButton label="Termin verknüpfen"><CalendarLinkIcon /></IconButton>
          <IconButton label="Aktualisieren"><RefreshIcon /></IconButton>
          <IconButton label="Preise">
            <span className="font-['Noto_Sans',sans-serif] text-[9px] text-[#b3b3f5]">1,23</span>
          </IconButton>
          <div className="flex flex-col gap-[7px]">
            <div className="flex flex-col gap-4 pt-[2px]">
              <IconButton label="Prüfliste"><CheckListIcon /></IconButton>
              <IconButton label="Bieter zuordnen"><PersonUpIcon /></IconButton>
            </div>
            <IconButton label="Freigeben"><RedCheckIcon /></IconButton>
          </div>
        </div>
      </div>

      <div className="flex h-[39px] items-center pr-[45px] pl-[2px]">
        <label htmlFor="view" className="w-[51px]">Anzeige:</label>
        <DropDown id="view" className="w-[138px]" />
        <DropDown label="Anzeige Filter" className="ml-[3px] w-[105px]" />
        <label className="ml-[6px] flex items-center gap-[3px]">
          <span className="relative flex h-[13px] w-[13px]">
            <input
              type="checkbox"
              checked={standardOnly}
              onChange={(e) => setStandardOnly(e.target.checked)}
              className="h-[13px] w-[13px] appearance-none border border-[#333] bg-white"
            />
            {standardOnly && (
              <Icon className="pointer-events-none absolute h-[13px] w-[13px]">
                <path d="M3 8l3.500 4L13 4" fill="none" stroke="#222" strokeWidth="1.5" />
              </Icon>
            )}
          </span>
          nur Standard
        </label>
        <div className="ml-auto flex gap-[11px]">
          <PushButton>Durchschnittspreise</PushButton>
          <PushButton>Minimalpreise (opt. Bieter)</PushButton>
          <PushButton>Diff. opt. Bieter</PushButton>
          <PushButton disabled>Standard markieren</PushButton>
          <PushButton>LV erstellen (markierte)</PushButton>
        </div>
      </div>

      <div className="flex">
        <BidderGrid />
        <div className="flex w-[44px] flex-col items-start gap-[10px] pt-[4px] pl-[11px]">
          <IconButton label="Formular"><FormIcon /></IconButton>
          <IconButton label="Bericht"><ReportIcon /></IconButton>
          <IconButton label="Bericht Bieter"><ReportIcon /></IconButton>
        </div>
      </div>

      <div className="flex h-[34px] items-center justify-end pr-[47px]">
        <span className="mr-[31px]">E-Mail zur Vergabe versenden:</span>
        <IconButton label="E-Mail"><MailIcon /></IconButton>
        <span className="w-[18px]" />
        <IconButton label="Drucken"><PrinterIcon /></IconButton>
        <span className="w-[13px]" />
        <PushButton>Bietervergleich</PushButton>
        <span className="w-[13px]" />
        <IconButton label="Bieter hinzufügen"><PlusIcon /></IconButton>
        <span className="w-4" />
        <IconButton label="Bieter entfernen"><DeleteIcon /></IconButton>
      </div>
    </main>
  );
};

const SideButton = ({ label, arrow }) => (
  <button className="flex h-[22px] w-full items-center">
    <span className="flex-1 text-center whitespace-nowrap">{label}</span>
    <svg viewBox="0 0 8 5" className="mr-[6px] ml-[6px] h-[5px] w-[7px]" aria-hidden="true">
      {arrow && <path d="M0 0h8L4 5z" fill="#222" />}
    </svg>
  </button>
);

const SidePanel = () => (
  <aside className="w-[150px] shrink-0 border-t border-l-2 border-[#a0a0a0] pt-[3px]">
    {sideActions.map(([label, arrow]) => (
      <SideButton key={label} label={label} arrow={arrow} />
    ))}
    <hr className="mx-[2px] mt-px mb-[5px] border-[#808080]" />
    <SideButton label="Aktionen" arrow />
  </aside>
);

const App = () => {
  const [tab, setTab] = useState('Vergaben');
  const [workspace, setWorkspace] = useState('Projekte');

  return (
    <div className="flex min-h-screen flex-col overflow-hidden bg-[#f0f0f0] font-['Liberation_Sans',Arial,sans-serif] text-[11px] leading-4 text-black">
      <TitleBar />
      <SearchRow />
      <ProjectList />

      <div className="mt-2 flex flex-1 border border-b-2 border-[#a0a0a0]">
        <div className="flex min-w-0 flex-1 flex-col">
          <StatusStrip />
          <TabStrip active={tab} onSelect={setTab} />
          <AwardPage />
        </div>
        <SidePanel />
      </div>

      <nav className={clsx('flex h-[26px] items-center bg-white pl-px', segoe)}>
        {workspaces.map(([name, WorkspaceIcon]) => (
          <button
            key={name}
            onClick={() => setWorkspace(name)}
            className={clsx(
              'flex h-[21px] w-[120px] items-center gap-[4px] border pl-[3px]',
              workspace === name ? 'border-[#99d1ff] bg-[#cce8ff]' : 'border-transparent',
            )}
          >
            <WorkspaceIcon />
            {name}
          </button>
        ))}
      </nav>

      <footer className={clsx('flex h-6 items-center border-t-2 border-[#d7d7d7]', segoe)}>
        {statusCells.map(([text, width], i) => (
          <span key={i} className={clsx('h-5 border-r border-[#d7d7d7] text-center leading-5', width)}>
            {text}
          </span>
        ))}
        <span className="h-5 w-[250px] border-r border-[#d7d7d7] pl-[4px] leading-5">Mandant: 1 swp-Bau GmbH</span>
      </footer>
    </div>
  );
};

export default App;
